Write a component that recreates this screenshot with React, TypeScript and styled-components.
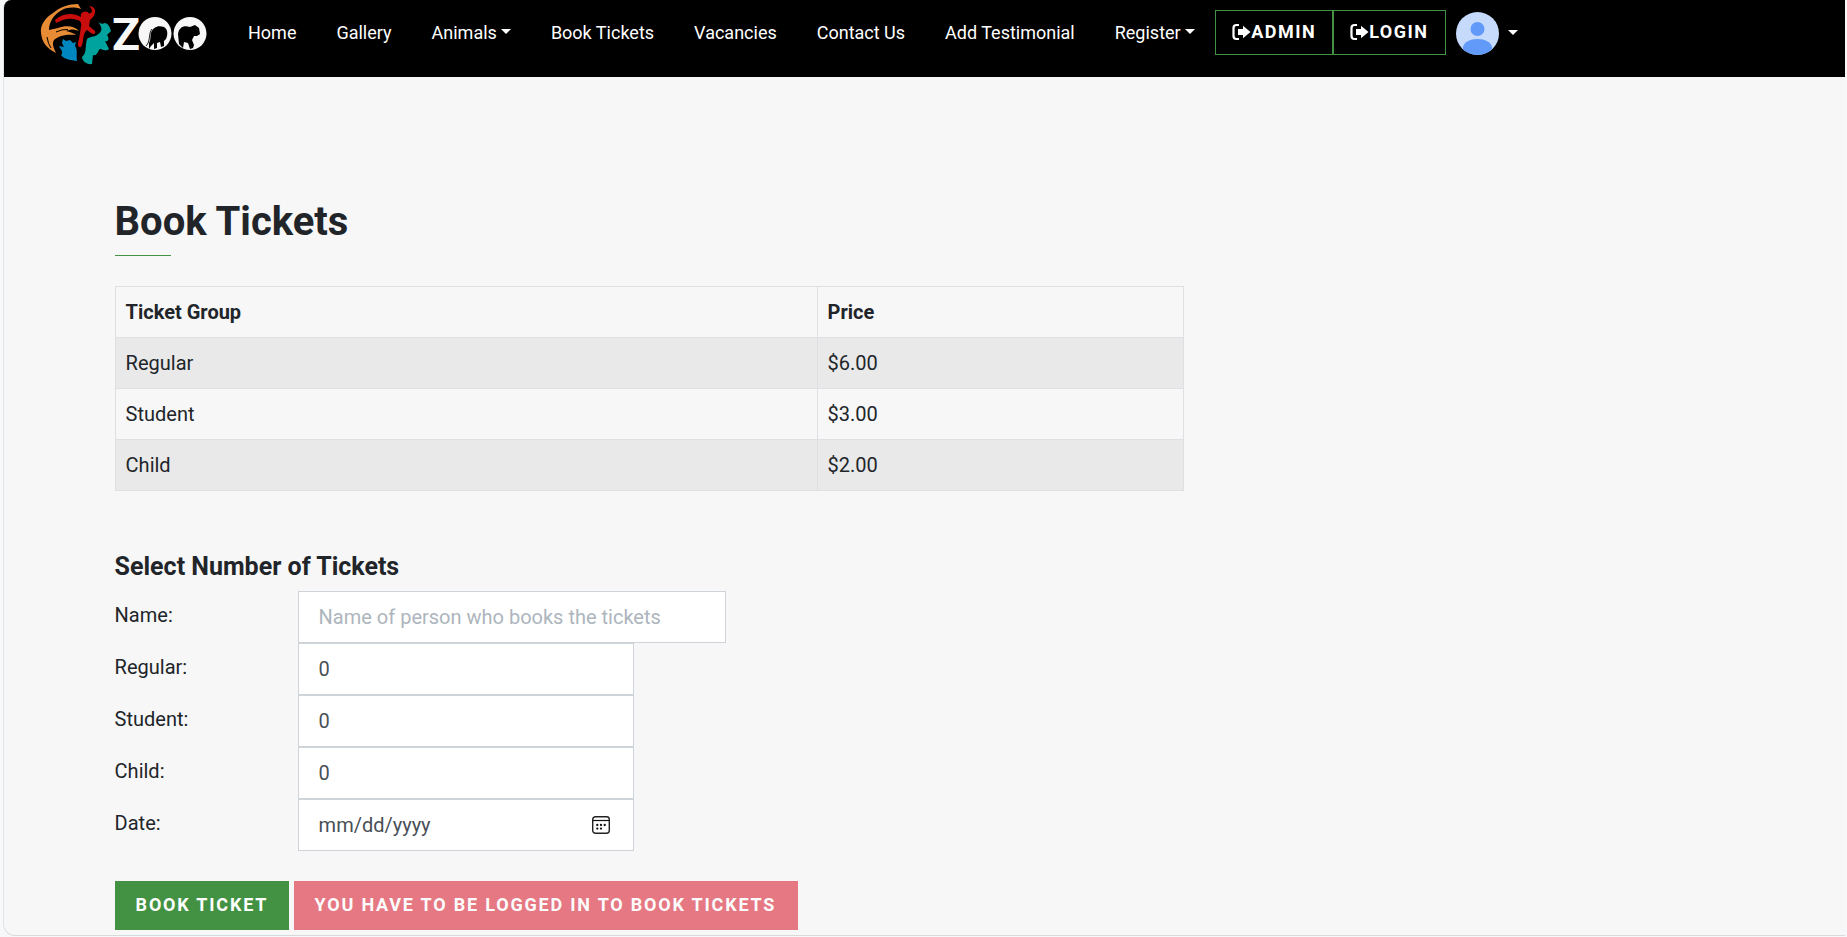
import React from "react";
import styled, { createGlobalStyle } from "styled-components";

const GlobalStyle = createGlobalStyle`
  *, *::before, *::after { box-sizing: border-box; }
  body {
    margin: 0;
    background: #f7f8f9;
    color: #212529;
    font: 400 20px/34px Roboto, sans-serif;
    overflow: hidden;
  }
`;

const Frame = styled.div`
  height: 936px;
  margin: 0 2px 1px 3px;
  border: 1px solid #e2e3e4;
  border-top: 0;
  border-right: 0;
  border-bottom: 1px solid #d9dadb;
  border-radius: 8px 0 0 12px;
  background: #f7f7f7;
  overflow: hidden;
`;

const Navbar = styled.nav`
  display: flex;
  align-items: flex-start;
  height: 77px;
  padding-left: 36px;
  background: #000;
  color: #fff;
`;

const Logo = styled.svg`
  width: 168px;
  height: 66px;
  flex: none;
`;

const NavLinks = styled.div`
  display: flex;
  padding: 16px 0 0 20px;
`;

const NavLink = styled.a`
  display: flex;
  align-items: center;
  padding: 0 20px;
  font-size: 18px;
  line-height: 34px;
  white-space: nowrap;
`;

const Caret = styled.span`
  margin: 0 0 3px 4px;
  border: 5px solid transparent;
  border-top-color: #fff;
  border-bottom: 0;
`;

const NavButtons = styled.div`
  display: flex;
  padding-top: 10px;
`;

const NavButton = styled.button<{ $width: number }>`
  display: flex;
  align-items: center;
  width: ${(p) => p.$width}px;
  height: 45px;
  padding: 0 0 2px 15.5px;
  border: 1px solid #439243;
  background: transparent;
  color: #fff;
  font: 700 18px/27px Roboto, sans-serif;
  letter-spacing: 1.5px;
`;

const ExitSvg = styled.svg`
  width: 20px;
  height: 18px;
  flex: none;
`;

const Account = styled.div`
  display: flex;
  align-items: center;
  padding: 12px 0 0 10px;
`;

const Avatar = styled.svg`
  width: 43px;
  height: 43px;
  margin-right: 5px;
`;

const Main = styled.main`
  padding: 121px 0 0 110.6px;
`;

const Title = styled.h1`
  margin: 0;
  font-size: 40px;
  line-height: 48px;
  font-weight: 700;
`;

const Rule = styled.div`
  width: 56px;
  height: 1px;
  margin: 9px 0 30px;
  background: #439243;
`;

const Table = styled.table`
  width: 1069px;
  border-collapse: collapse;
  table-layout: fixed;
`;

const Row = styled.tr<{ $shaded?: boolean }>`
  background: ${(p) => (p.$shaded ? "#e9e9e9" : "transparent")};
`;

const Cell = styled.td<{ $head?: boolean }>`
  height: 51px;
  padding: 8px 10px;
  border: 1px solid #dee0e4;
  font-weight: ${(p) => (p.$head ? 700 : 400)};
  &:first-child { width: 702px; }
`;

const SubTitle = styled.h2`
  margin: 61px 0 10px;
  font-size: 25px;
  line-height: 29px;
  font-weight: 700;
`;

const Field = styled.label`
  display: grid;
  grid-template-columns: 183px auto;
  justify-content: start;
  height: 52px;
`;

const FieldName = styled.span`
  padding-top: 7px;
`;

const Control = styled.span<{ $wide?: boolean; $muted?: boolean }>`
  display: flex;
  align-items: center;
  justify-content: space-between;
  width: ${(p) => (p.$wide ? 428 : 336)}px;
  height: 52px;
  padding: 0 23px 0 20px;
  border: 1px solid #ced4da;
  background: #fff;
  color: ${(p) => (p.$muted ? "#adb5bd" : "#495057")};
`;

const CalendarSvg = styled.svg`
  width: 18px;
  height: 18px;
`;

const Actions = styled.div`
  display: flex;
  gap: 5px;
  margin-top: 30px;
`;

const Action = styled.button<{ $danger?: boolean }>`
  width: ${(p) => (p.$danger ? 504 : 174)}px;
  height: 49px;
  padding: 0 0 2px 21px;
  border: 0;
  background: ${(p) => (p.$danger ? "#dc3545" : "#439243")};
  opacity: ${(p) => (p.$danger ? 0.65 : 1)};
  color: #fff;
  font: 700 18px/27px Roboto, sans-serif;
  letter-spacing: 1.8px;
  text-align: left;
  white-space: nowrap;
`;

const ZooLogo = () => (
  <Logo viewBox="40 0 168 66">
    <path fill="#e78b35" d="M78 4C69 4 60 7 53 13C45 18 40 25 41 33C42 42 46 48 56 53C53 47 52 43 54 40C59 35 68 34 76 35C74 33 70 32 66 31C71 29 75 29 79 31C75 26 66 25 58 28L49 30C49 22 54 14 62 10C68 7 74 7 81 9Z" />
    <path stroke="#000" strokeWidth="1" fill="none" d="M47 37Q48 44 51 48M56 32Q62 29 68 29.500" />
    <path fill="#c90d0c" d="M55 20C62 13 73 12 81 17C80 13 83 11 87 13C92 15 94 10 89 6C97 6 97 15 90 20L89 26L95 31C96 34 94 35 91 33L87 30C82 34 84 43 81 47C78 48 77 44 79 39L81 27C82 23 80 20 77 20C70 17 62 20 56 23Z" />
    <circle cx="85.500" cy="15" r="3.400" fill="#c90d0c" />
    <path fill="#00a39d" d="M98 18C98 22 100 25 105 23C109 24 110 28 111 31L107 35C110 39 108 42 105 41L109 49C105 53 100 47 99 50C97 54 96 56 93 55L92 64C87 65 82 61 82 57C87 53 85 46 87 39C91 36 98 37 101 31C103 26 98 25 98 18Z" />
    <path fill="#0187c0" d="M63 39L66 41L70 40L73 43L76 42L75 46C78 50 76 55 77 61C71 60 65 60 61 55C64 52 61 50 59 46L64 47L62 43Z" />
    <text x="112" y="50" fill="#f7f7f7" fontFamily="Roboto, sans-serif" fontSize="45" fontWeight="700" textLength="28" lengthAdjust="spacingAndGlyphs">Z</text>
    <circle cx="155" cy="33.500" r="16.500" fill="#f7f7f7" />
    <path d="M149 43C151 40 150 37 151 33C153 27 158 25 164 27C168 29 168 35 166 39L164 41L164 46L161 47L160 42L157 43L157 48L154 49L154 43L151 46L149 49Z" />
    <path stroke="#000" fill="none" strokeWidth="0.900" d="M152 29C148 34 151 41 146 46" />
    <circle cx="190" cy="33.500" r="16.500" fill="#f7f7f7" />
    <path d="M178 34C179 27 184 25 190 27L195 25L199 28L200 34L197 36L194 36L192 40L194 45L193 48L190 49L188 43L184 42L183 48L179 44Z" />
  </Logo>
);

const ExitIcon = () => (
  <ExitSvg viewBox="0 0 20 18">
    <path d="M8 2H5.500Q2.500 2 2.500 5V13Q2.500 16 5.500 16H8" fill="none" stroke="#fff" strokeWidth="2.200" />
    <path fill="#fff" d="M7 6H12V2.700L19.500 9L12 15.300V12H7Z" />
  </ExitSvg>
);

const CalendarIcon = () => (
  <CalendarSvg viewBox="0 0 18 18">
    <rect x="0.700" y="0.700" width="16.600" height="16.600" rx="2.700" fill="none" stroke="#222" strokeWidth="1.400" />
    <path d="M1 4.500H17" stroke="#111" strokeWidth="1.200" />
    <g fill="#111">
      <circle cx="5.300" cy="9" r="1.150" />
      <circle cx="9" cy="9" r="1.150" />
      <circle cx="12.700" cy="9" r="1.150" />
      <circle cx="5.300" cy="12.600" r="1.150" />
      <circle cx="9" cy="12.600" r="1.150" />
    </g>
  </CalendarSvg>
);

const links = [
  { label: "Home" },
  { label: "Gallery" },
  { label: "Animals", menu: true },
  { label: "Book Tickets" },
  { label: "Vacancies" },
  { label: "Contact Us" },
  { label: "Add Testimonial" },
  { label: "Register", menu: true },
];

const prices = [
  ["Regular", "$6.00"],
  ["Student", "$3.00"],
  ["Child", "$2.00"],
];

export default function App() {
  return (
    <>
      <GlobalStyle />
      <Frame>
        <Navbar>
          <ZooLogo />
          <NavLinks>
            {links.map((link) => (
              <NavLink key={link.label}>
                {link.label}
                {link.menu && <Caret />}
              </NavLink>
            ))}
          </NavLinks>
          <NavButtons>
            <NavButton $width={118}><ExitIcon />ADMIN</NavButton>
            <NavButton $width={113}><ExitIcon />LOGIN</NavButton>
          </NavButtons>
          <Account>
            <Avatar viewBox="0 0 43 43">
              <clipPath id="avatar"><circle cx="21.500" cy="21.500" r="21.500" /></clipPath>
              <g clipPath="url(#avatar)">
                <rect width="43" height="43" fill="#c6dafb" />
                <circle cx="21.500" cy="17" r="7" fill="#619af8" />
                <path fill="#619af8" d="M7 35C8 30 14 27 21.500 27S35 30 36 35V43H7Z" />
              </g>
            </Avatar>
            <Caret />
          </Account>
        </Navbar>
        <Main>
          <Title>Book Tickets</Title>
          <Rule />
          <Table>
            <tbody>
              <Row>
                <Cell as="th" $head align="left">Ticket Group</Cell>
                <Cell as="th" $head align="left">Price</Cell>
              </Row>
              {prices.map(([group, price], i) => (
                <Row key={group} $shaded={i % 2 === 0}>
                  <Cell>{group}</Cell>
                  <Cell>{price}</Cell>
                </Row>
              ))}
            </tbody>
          </Table>
          <SubTitle>Select Number of Tickets</SubTitle>
          <Field><FieldName>Name:</FieldName><Control $wide $muted>Name of person who books the tickets</Control></Field>
          <Field><FieldName>Regular:</FieldName><Control>0</Control></Field>
          <Field><FieldName>Student:</FieldName><Control>0</Control></Field>
          <Field><FieldName>Child:</FieldName><Control>0</Control></Field>
          <Field><FieldName>Date:</FieldName><Control>mm/dd/yyyy<CalendarIcon /></Control></Field>
          <Actions>
            <Action>BOOK TICKET</Action>
            <Action $danger>YOU HAVE TO BE LOGGED IN TO BOOK TICKETS</Action>
          </Actions>
        </Main>
      </Frame>
    </>
  );
}
